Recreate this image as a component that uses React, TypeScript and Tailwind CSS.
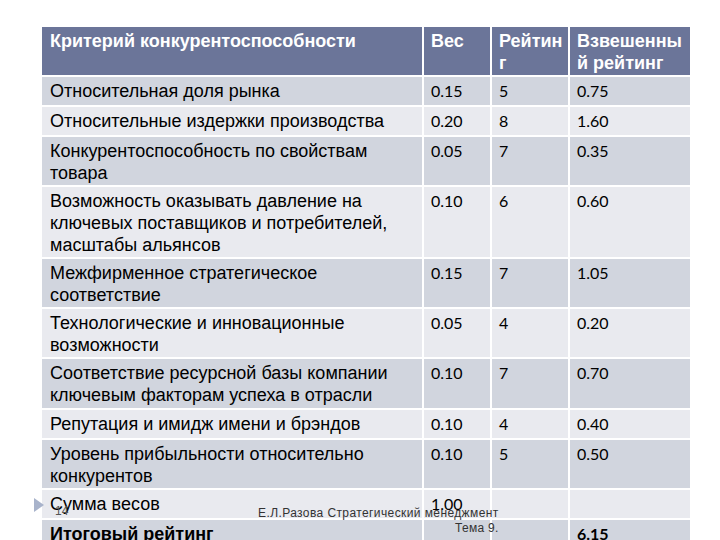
import React from "react";

type Row = { c: string[]; h: number; dark: boolean; bold?: boolean };

const rows: Row[] = [
  { c: ["Относительная доля рынка", "0.15", "5", "0.75"], h: 28, dark: true },
  { c: ["Относительные издержки производства", "0.20", "8", "1.60"], h: 28, dark: false },
  { c: ["Конкурентоспособность по свойствам товара", "0.05", "7", "0.35"], h: 48, dark: true },
  { c: ["Возможность оказывать давление на ключевых поставщиков и потребителей, масштабы альянсов", "0.10", "6", "0.60"], h: 70, dark: false },
  { c: ["Межфирменное стратегическое соответствие", "0.15", "7", "1.05"], h: 48, dark: true },
  { c: ["Технологические и инновационные возможности", "0.05", "4", "0.20"], h: 48, dark: false },
  { c: ["Соответствие ресурсной базы компании ключевым факторам успеха в отрасли", "0.10", "7", "0.70"], h: 49, dark: true },
  { c: ["Репутация и имидж имени и брэндов", "0.10", "4", "0.40"], h: 28, dark: false },
  { c: ["Уровень прибыльности относительно конкурентов", "0.10", "5", "0.50"], h: 48, dark: true },
  { c: ["Сумма весов", "1.00", "", ""], h: 28, dark: false },
  { c: ["Итоговый рейтинг", "", "", "6.15"], h: 40, dark: true, bold: true },
];

const text = "font-['Liberation_Sans',Arial,sans-serif]";
const num = "font-['Lato','DejaVu_Sans',sans-serif]";

export default function App() {
  return (
    <div className="relative w-[720px] h-[540px] overflow-hidden bg-white">
      <div className="pt-[27px] pl-[42px]">
        <div className="grid grid-cols-[380px_66px_76px_120px] gap-[2px] w-[648px] bg-white">
          {["Критерий конкурентоспособности", "Вес", "Рейтинг", "Взвешенный рейтинг"].map((t, i) => (
            <div
              key={i}
              className={`h-[48px] bg-[#6b7599] text-white font-bold text-[18px] leading-[22px] pt-[3px] ${i === 0 ? "pl-[8px]" : "pl-[7px] pr-[2px] break-all"} ${text}`}
            >
              {t}
            </div>
          ))}
          {rows.map((r, ri) =>
            r.c.map((t, ci) => (
              <div
                key={`${ri}-${ci}`}
                style={{ height: r.h }}
                className={`${r.dark ? "bg-[#d1d5de]" : "bg-[#e9eaef]"} leading-[22px] pt-[3px] text-black ${ci === 0 ? `pl-[8px] pr-[4px] text-[18px] ${text}` : `pl-[7px] text-[16px] ${num}`} ${r.bold ? "font-bold" : ""}`}
              >
                {t}
              </div>
            ))
          )}
        </div>
      </div>

      {/* slide footer overlay */}
      <svg className="absolute left-[33px] top-[497px]" width="12" height="16" viewBox="0 0 12 16">
        <polygon points="1,1 11,8 1,15" fill="#a8b3cb" />
      </svg>
      <div className={`absolute left-[55px] top-[504px] text-[12px] leading-[14px] text-[#555] ${text}`}>14</div>
      <div className={`absolute left-[258px] top-[506px] text-[12px] leading-[14px] tracking-[0.4px] text-[#333] ${text}`}>
        Е.Л.Разова Стратегический менеджмент
      </div>
      <div className={`absolute left-[455px] top-[521px] text-[12px] leading-[14px] tracking-[0.3px] text-[#333] ${text}`}>
        Тема 9.
      </div>
    </div>
  );
}
